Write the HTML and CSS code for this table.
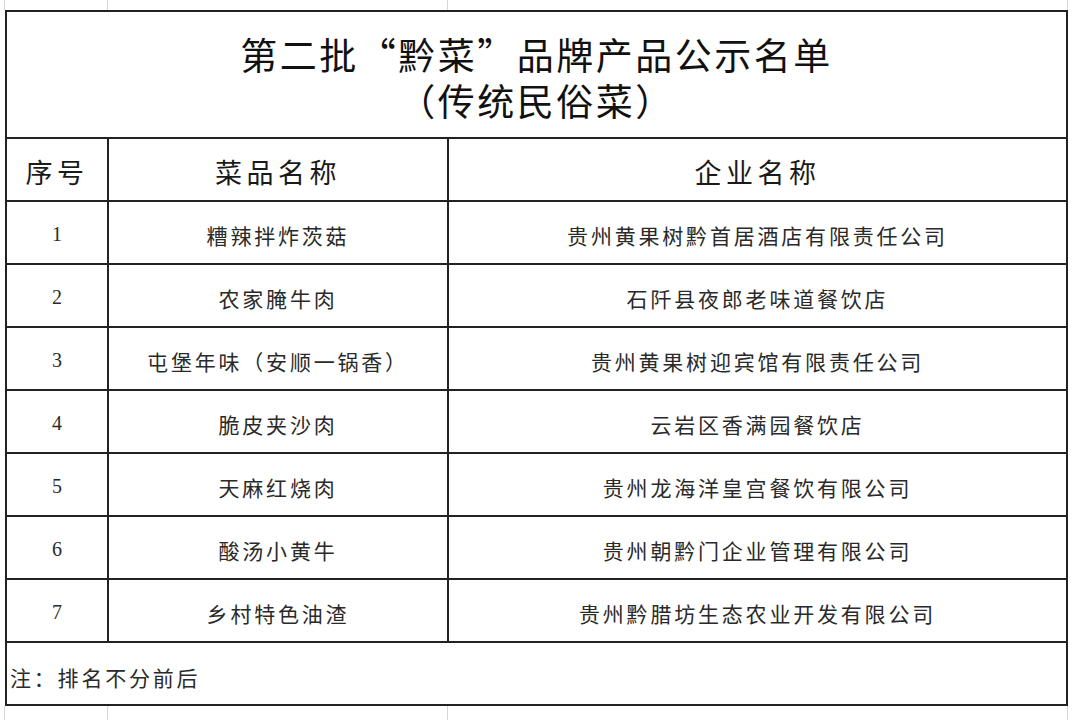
FILE: index.html
```html
<!DOCTYPE html>
<html lang="zh-CN">
<head>
<meta charset="utf-8">
<title>第二批“黔菜”品牌产品公示名单</title>
<link rel="stylesheet" href="styles.css">
</head>
<body>
<div class="sheet">
  <div class="strip strip-top">
    <div class="gcell"></div><div class="gcell"></div><div class="gcell"></div><div class="gcell"></div>
  </div>
  <div class="table">
    <div class="cell title span3">
      <h1 class="title-text">第二批“黔菜”品牌产品公示名单<br>（传统民俗菜）</h1>
    </div>
    <div class="cell head">序号</div>
    <div class="cell head">菜品名称</div>
    <div class="cell head">企业名称</div>

    <div class="cell num">1</div><div class="cell txt">糟辣拌炸茨菇</div><div class="cell txt">贵州黄果树黔首居酒店有限责任公司</div>
    <div class="cell num">2</div><div class="cell txt">农家腌牛肉</div><div class="cell txt">石阡县夜郎老味道餐饮店</div>
    <div class="cell num">3</div><div class="cell txt">屯堡年味（安顺一锅香）</div><div class="cell txt">贵州黄果树迎宾馆有限责任公司</div>
    <div class="cell num">4</div><div class="cell txt">脆皮夹沙肉</div><div class="cell txt">云岩区香满园餐饮店</div>
    <div class="cell num">5</div><div class="cell txt">天麻红烧肉</div><div class="cell txt">贵州龙海洋皇宫餐饮有限公司</div>
    <div class="cell num">6</div><div class="cell txt">酸汤小黄牛</div><div class="cell txt">贵州朝黔门企业管理有限公司</div>
    <div class="cell num">7</div><div class="cell txt">乡村特色油渣</div><div class="cell txt">贵州黔腊坊生态农业开发有限公司</div>

    <div class="cell note span3">注：排名不分前后</div>
  </div>
  <div class="strip strip-bottom">
    <div class="gcell"></div><div class="gcell"></div><div class="gcell"></div><div class="gcell"></div>
  </div>
</div>
</body>
</html>
```

FILE: styles.css
```css
html, body {
  margin: 0;
  padding: 0;
  background: #ffffff;
}
body {
  width: 1080px;
  height: 720px;
  overflow: hidden;
  font-family: "Noto Sans CJK SC", "Noto Sans", sans-serif;
  color: #222222;
}
.sheet {
  padding-left: 4px;
}
.strip {
  display: grid;
  grid-template-columns: 103px 340px 620px 10px;
}
.strip-top { height: 10px; }
.strip-bottom { height: 14px; }
.gcell {
  border-left: 1px solid #d6d6d6;
}
.table {
  margin-left: 1px;
  width: 1063px;
  box-sizing: border-box;
  border-top: 2px solid #222222;
  border-left: 2px solid #222222;
  display: grid;
  grid-template-columns: 102px 340px 619px;
  grid-template-rows: 127px 63px repeat(7, 63px) 63px;
}
.cell {
  box-sizing: border-box;
  border-right: 2px solid #222222;
  border-bottom: 2px solid #222222;
  display: flex;
  align-items: center;
  justify-content: center;
  text-align: center;
}
.span3 { grid-column: 1 / span 3; }
.title {
  padding-top: 4px;
}
.title-text {
  margin: 0;
  font-weight: 400;
  color: #111111;
  font-size: 37px;
  letter-spacing: 2.5px;
  line-height: 46px;
  text-align: center;
}
.head {
  font-size: 27px;
  letter-spacing: 4.5px;
  padding-top: 4px;
  color: #1a1a1a;
}
.txt {
  font-size: 21px;
  letter-spacing: 2.8px;
  padding-top: 4px;
  color: #2a2a2a;
}
.num {
  font-family: "Liberation Serif", serif;
  font-size: 20px;
  padding-top: 4px;
  color: #2a2a2a;
}
.note {
  justify-content: flex-start;
  padding-left: 3px;
  padding-top: 6px;
  font-size: 21px;
  letter-spacing: 2.8px;
  color: #2a2a2a;
}
```
